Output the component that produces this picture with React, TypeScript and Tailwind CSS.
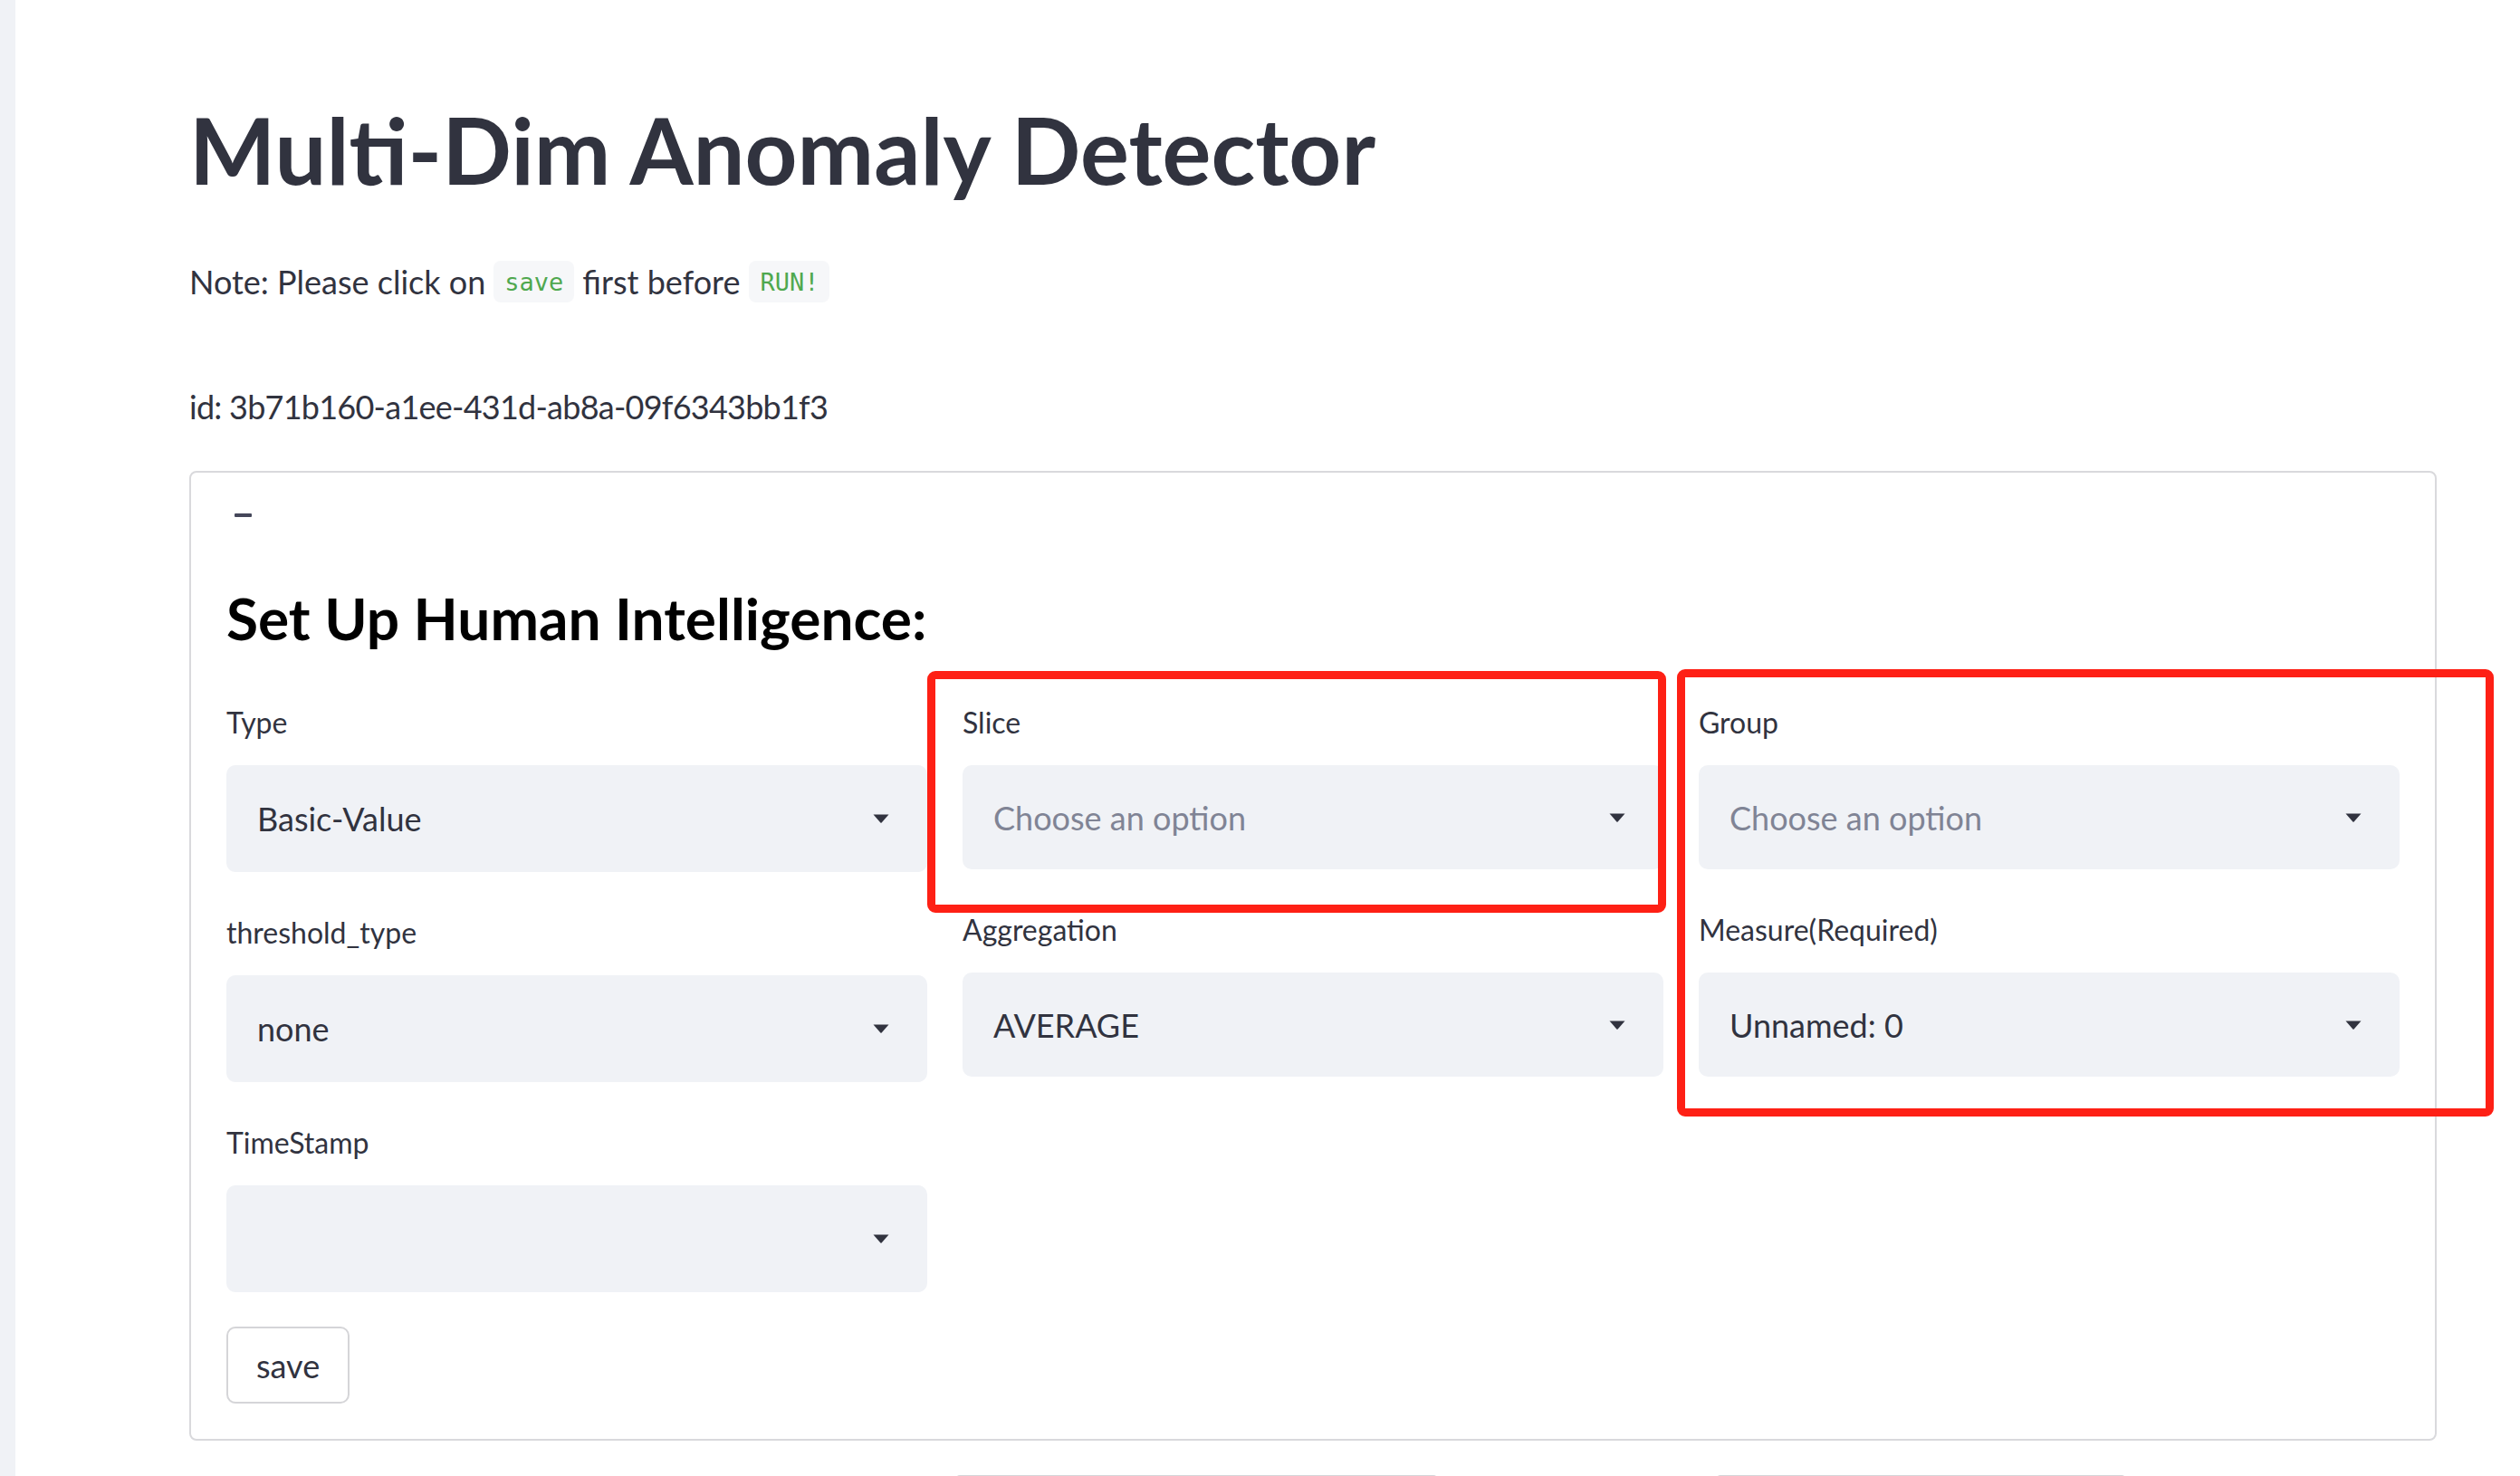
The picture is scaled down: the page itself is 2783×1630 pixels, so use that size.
import React from "react";

const font = "font-['Lato','Liberation_Sans',sans-serif]";

const Caret = () => (
  <svg width="18" height="10" viewBox="0 0 18 10" className="shrink-0">
    <path d="M0.5 0.5 H17.5 L9.6 9.4 Q9 10 8.4 9.4 Z" fill="#31333F" />
  </svg>
);

type SelectProps = { label: string; value?: string; placeholder?: boolean; tall?: boolean };

const Select = ({ label, value, placeholder, tall }: SelectProps) => (
  <div className="flex flex-col">
    <div className="h-[36px] mb-[29px] text-[32px] leading-[36px] text-[#31333F]">{label}</div>
    <div
      className={`flex items-center justify-between bg-[#f0f2f6] rounded-[10px] pl-[34px] pr-[42px] ${
        tall ? "h-[118px]" : "h-[115px]"
      }`}
    >
      <span className={`text-[36px] leading-[42px] ${placeholder ? "text-[#808495]" : "text-[#31333F]"}`}>
        {value}
      </span>
      <Caret />
    </div>
  </div>
);

export default function App() {
  return (
    <div className={`relative flex w-full h-[1630px] bg-white overflow-hidden ${font}`}>
      {/* sidebar edge */}
      <div className="w-[17px] h-full bg-[#f0f2f6] shrink-0" />

      <div className="flex-1 pl-[192px] pr-[92px]">
        <h1 className="mt-[105px] text-[101px] leading-[120px] font-bold text-[#31333F]">
          Multi-Dim Anomaly Detector
        </h1>

        <p className="mt-[63px] flex items-center text-[36px] leading-[43px] text-[#31333F]">
          <span>Note: Please click on</span>
          <code className="mx-[9px] px-[12px] h-[46px] flex items-center rounded-[8px] bg-[#f6f7f9] text-[#4fa84f] text-[27px] font-['DejaVu_Sans_Mono',monospace]">
            save
          </code>
          <span>first before</span>
          <code className="ml-[10px] px-[12px] h-[46px] flex items-center rounded-[8px] bg-[#f6f7f9] text-[#4fa84f] text-[27px] font-['DejaVu_Sans_Mono',monospace]">
            RUN!
          </code>
        </p>

        <p className="mt-[94px] text-[36px] leading-[43px] text-[#31333F] tracking-[-0.75px]">
          id: 3b71b160-a1ee-431d-ab8a-09f6343bb1f3
        </p>

        {/* expander card */}
        <div className="mt-[49px] border-2 border-[#d9d9dc] rounded-[8px] pt-[45px] px-[39px] pb-[39px]">
          <div className="ml-[9px] w-[19px] h-[4px] bg-[#45475a] rounded-[1px]" />

          <h3 className="mt-[75px] text-[64px] leading-[73px] font-bold text-black">Set Up Human Intelligence:</h3>

          <div className="mt-[61px] grid grid-cols-3 gap-x-[39px] items-start">
            <div className="flex flex-col gap-[49px]">
              <Select label="Type" value="Basic-Value" tall />
              <Select label="threshold_type" value="none" tall />
              <Select label="TimeStamp" value="" tall />
            </div>
            <div className="flex flex-col gap-[49px]">
              <Select label="Slice" value="Choose an option" placeholder />
              <Select label="Aggregation" value="AVERAGE" />
            </div>
            <div className="flex flex-col gap-[49px]">
              <Select label="Group" value="Choose an option" placeholder />
              <Select label="Measure(Required)" value="Unnamed: 0" />
            </div>
          </div>

          <button className="mt-[38px] h-[85px] px-[31px] border-2 border-[#d5d5d8] rounded-[10px] bg-white text-[36px] leading-[42px] text-[#31333F]">
            save
          </button>
        </div>

        {/* next row, cut off by the window */}
        <div className="mt-[38px] flex">
          <div className="ml-[847px] w-[531px] h-[4px] border-t-2 border-[#d5d5d8] rounded-t-[6px]" />
          <div className="ml-[309px] w-[451px] h-[4px] border-t-2 border-[#d5d5d8] rounded-t-[6px]" />
        </div>
      </div>

      {/* red annotation boxes */}
      <div className="absolute left-[1024px] top-[741px] w-[816px] h-[267px] border-[9px] border-[#fe2015] rounded-[9px]" />
      <div className="absolute left-[1852px] top-[739px] w-[902px] h-[494px] border-[9px] border-[#fe2015] rounded-[9px]" />
    </div>
  );
}
